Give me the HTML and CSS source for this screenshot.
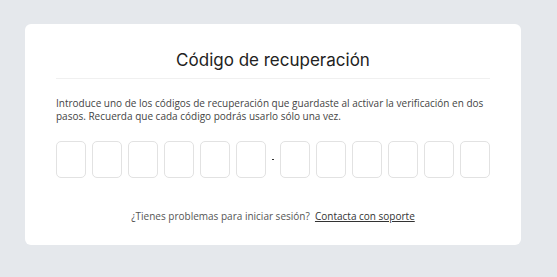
FILE: index.html
```html
<!DOCTYPE html>
<html lang="es">
<head>
  <meta charset="UTF-8">
  <title>Código de recuperación</title>
  <link rel="stylesheet" href="styles.css">
</head>
<body>

  <div class="card">
    <h1 class="card-title">Código de recuperación</h1>

    <p class="intro">Introduce uno de los códigos de recuperación que guardaste al activar la verificación en dos pasos. Recuerda que cada código podrás usarlo sólo una vez.</p>

    <!-- code inputs -->
    <div class="code-row">
      <input class="code-box" type="text" maxlength="1">
      <input class="code-box" type="text" maxlength="1">
      <input class="code-box" type="text" maxlength="1">
      <input class="code-box" type="text" maxlength="1">
      <input class="code-box" type="text" maxlength="1">
      <input class="code-box" type="text" maxlength="1">
      <span class="code-dash"></span>
      <input class="code-box" type="text" maxlength="1">
      <input class="code-box" type="text" maxlength="1">
      <input class="code-box" type="text" maxlength="1">
      <input class="code-box" type="text" maxlength="1">
      <input class="code-box" type="text" maxlength="1">
      <input class="code-box" type="text" maxlength="1">
    </div>

    <p class="help">¿Tienes problemas para iniciar sesión?&nbsp; <a href="#" class="help-link">Contacta con soporte</a></p>
  </div>

</body>
</html>
```

FILE: styles.css
```css
body {
  margin: 0;
  background-color: #e5e8ec;
  font-family: 'Open Sans', sans-serif;
}

.card {
  width: 434px;
  margin: 24px 0 0 25px;
  padding: 22px 31px 22px;
  background-color: white;
  border-radius: 6px;
}

.card-title {
  margin: 0;
  padding-bottom: 4px;
  border-bottom: 1px solid #f0f0f0;
  font-family: 'Inter', sans-serif;
  font-size: 17px;
  font-weight: 400;
  line-height: 28px;
  color: #222;
  text-align: center;
}

.intro {
  margin: 18px 0 0;
  font-size: 10px;
  line-height: 13px;
  color: #444;
}

.code-row {
  display: flex;
  align-items: center;
  gap: 6px;
  margin-top: 18px;
}

.code-box {
  box-sizing: border-box;
  width: 30px;
  height: 37px;
  margin: 0;
  padding: 0;
  border: 1px solid #e2e2e2;
  border-radius: 5px;
  background: white;
}

.code-dash {
  width: 3px;
  height: 1px;
  background-color: #333;
}

.help {
  margin: 31px 0 0;
  font-size: 10px;
  line-height: 14px;
  color: #555;
  text-align: center;
}

.help-link {
  color: #333;
}
```
